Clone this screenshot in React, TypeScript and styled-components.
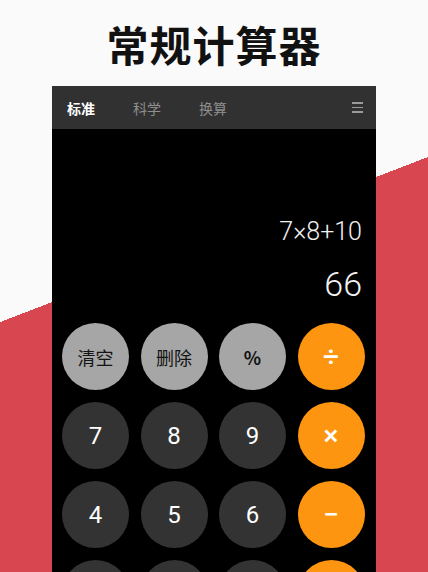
import { createGlobalStyle } from 'styled-components';
import styled from 'styled-components';

const GlobalStyle = createGlobalStyle`
  html, body {
    margin: 0;
    padding: 0;
  }
  body {
    font-family: "Noto Sans", "Noto Sans CJK SC", sans-serif;
  }
`;

const Page = styled.div`
  width: 428px;
  height: 572px;
  overflow: hidden;
  display: flex;
  flex-direction: column;
  align-items: center;
  background: linear-gradient(158.9deg, #fafafa 43.7%, #d8474f 43.7%);
`;

const Title = styled.h1`
  margin: 0;
  height: 86px;
  flex-shrink: 0;
  display: flex;
  align-items: center;
  justify-content: center;
  font-family: "Noto Sans CJK SC", sans-serif;
  font-size: 42px;
  font-weight: 700;
  color: #111;
  letter-spacing: 1px;
`;

const Phone = styled.div`
  width: 324px;
  flex-shrink: 0;
  background: #000;
  display: flex;
  flex-direction: column;
`;

const TabBar = styled.div`
  height: 43px;
  background: #313131;
  display: flex;
  align-items: center;
  padding: 0 13px 0 15px;
  gap: 38px;
`;

const Tab = styled.span<{ $active?: boolean }>`
  font-family: "Noto Sans CJK SC", sans-serif;
  font-size: 14px;
  font-weight: ${(p) => (p.$active ? 700 : 400)};
  color: ${(p) => (p.$active ? '#ffffff' : '#8e8e8e')};
`;

const Menu = styled.div`
  margin-left: auto;
  width: 11px;
  display: flex;
  flex-direction: column;
  gap: 3px;

  span {
    height: 1.5px;
    background: #9a9a9a;
  }
`;

const Display = styled.div`
  height: 184px;
  display: flex;
  flex-direction: column;
  justify-content: flex-end;
  align-items: flex-end;
  padding: 0 14px 9px 0;
  box-sizing: border-box;
  gap: 17px;
  font-family: Roboto, "Noto Sans", sans-serif;
  font-weight: 300;
  color: #f2f2f2;
`;

const Expression = styled.div`
  font-size: 25px;
  line-height: 30px;
`;

const Result = styled.div`
  font-size: 34px;
  line-height: 40px;
`;

const Keypad = styled.div`
  display: grid;
  grid-template-columns: repeat(4, 67px);
  column-gap: 11.5px;
  row-gap: 12px;
  padding: 10px 11px 20px 10px;
`;

type Kind = 'func' | 'num' | 'op';

const Key = styled.button<{ $kind: Kind; $bold?: boolean }>`
  width: 67px;
  height: 67px;
  border: none;
  border-radius: 50%;
  padding: 0;
  display: flex;
  align-items: center;
  justify-content: center;
  background: ${(p) => (p.$kind === 'func' ? '#a6a6a6' : p.$kind === 'op' ? '#fe9510' : '#333333')};
  color: ${(p) => (p.$kind === 'func' ? '#141414' : '#ffffff')};
  font-family: ${(p) => (p.$kind === 'func' ? '"Noto Sans CJK SC", sans-serif' : 'Roboto, "Noto Sans", sans-serif')};
  font-size: ${(p) => (p.$kind === 'func' ? '18px' : p.$kind === 'op' ? '28px' : '24px')};
  font-weight: ${(p) => (p.$bold ? 700 : p.$kind === 'op' ? 500 : 400)};
`;

const keys: { label: string; kind: Kind; bold?: boolean }[] = [
  { label: '清空', kind: 'func' },
  { label: '删除', kind: 'func' },
  { label: '%', kind: 'func', bold: true },
  { label: '÷', kind: 'op' },
  { label: '7', kind: 'num' },
  { label: '8', kind: 'num' },
  { label: '9', kind: 'num' },
  { label: '×', kind: 'op' },
  { label: '4', kind: 'num' },
  { label: '5', kind: 'num' },
  { label: '6', kind: 'num' },
  { label: '−', kind: 'op' },
  { label: '1', kind: 'num' },
  { label: '2', kind: 'num' },
  { label: '3', kind: 'num' },
  { label: '+', kind: 'op' },
];

const App = () => {
  return (
    <Page>
      <GlobalStyle />
      <Title>常规计算器</Title>
      <Phone>
        <TabBar>
          <Tab $active>标准</Tab>
          <Tab>科学</Tab>
          <Tab>换算</Tab>
          <Menu>
            <span />
            <span />
            <span />
          </Menu>
        </TabBar>
        <Display>
          <Expression>7×8+10</Expression>
          <Result>66</Result>
        </Display>
        <Keypad>
          {keys.map((k) => (
            <Key key={k.label} $kind={k.kind} $bold={k.bold}>
              {k.label}
            </Key>
          ))}
        </Keypad>
      </Phone>
    </Page>
  );
};

export default App;
